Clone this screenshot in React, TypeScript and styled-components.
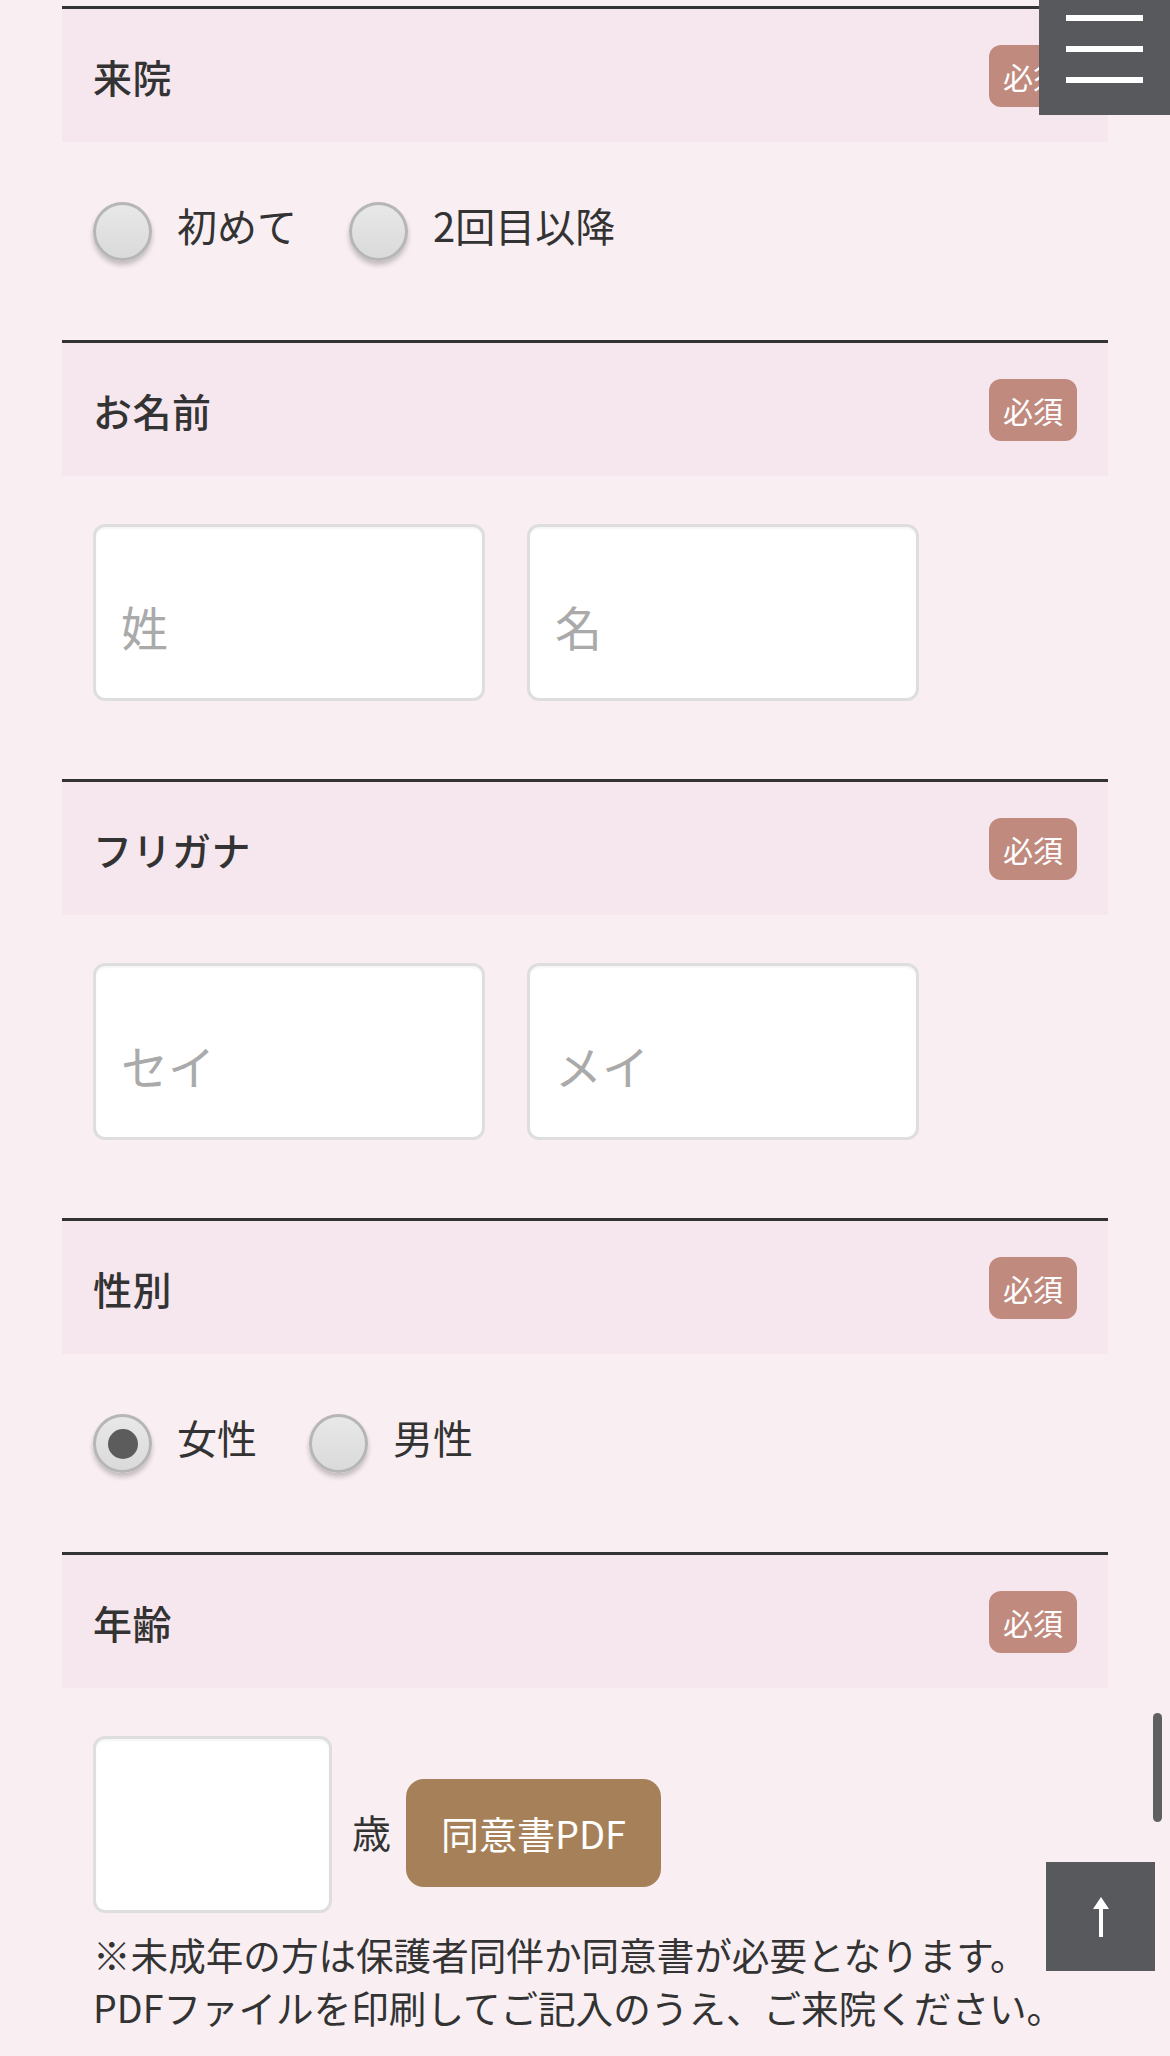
import styled, { createGlobalStyle } from 'styled-components'

const GlobalStyle = createGlobalStyle`
  html, body {
    margin: 0;
    padding: 0;
    overflow: hidden;
    background: #f9eff3;
    font-family: 'Noto Sans CJK JP', 'Noto Sans', sans-serif;
    color: #333;
  }
`

const Page = styled.div`
  padding: 6px 62px 0;
`

const Section = styled.section``

const Head = styled.div`
  display: flex;
  align-items: center;
  justify-content: space-between;
  height: 133px;
  padding: 0 31px;
  border-top: 3px solid #333;
  background: #f6e7ee;
`

const Title = styled.div`
  font-size: 39px;
  font-weight: 500;
  letter-spacing: 0.5px;
`

const Badge = styled.span`
  display: flex;
  align-items: center;
  justify-content: center;
  width: 88px;
  height: 62px;
  border-radius: 12px;
  background: #c08b7e;
  color: #fff;
  font-size: 30px;
  font-weight: 400;
`

const Body = styled.div<{ $top: number; $bottom: number }>`
  padding: ${(p) => p.$top}px 31px ${(p) => p.$bottom}px;
`

const RadioGroup = styled.div`
  display: flex;
  align-items: center;
  gap: 52px;
  height: 57px;
`

const RadioItem = styled.label`
  display: flex;
  align-items: center;
  gap: 25px;
  font-size: 40px;
  line-height: 1;
`

const RadioText = styled.span`
  padding-bottom: 13px;
`

const Circle = styled.span<{ $checked?: boolean }>`
  display: flex;
  align-items: center;
  justify-content: center;
  box-sizing: border-box;
  width: 59px;
  height: 59px;
  border-radius: 50%;
  border: 3px solid #b6b6b6;
  background: linear-gradient(#e8e8e8, #dadada);
  box-shadow: 0 4px 5px rgba(0, 0, 0, 0.22);

  &::after {
    content: '';
    display: ${(p) => (p.$checked ? 'block' : 'none')};
    width: 30px;
    height: 30px;
    border-radius: 50%;
    background: #5c5c5c;
  }
`

const InputRow = styled.div`
  display: flex;
  gap: 42px;
`

const TextBox = styled.input<{ $w: number }>`
  box-sizing: border-box;
  width: ${(p) => p.$w}px;
  height: 177px;
  padding: 26px 25px 0;
  border: 3px solid #dedede;
  border-radius: 12px;
  background: #fff;
  box-shadow: inset 0 2px 2px rgba(0, 0, 0, 0.04);
  font-family: inherit;
  font-size: 47px;
  color: #333;
  outline: none;

  &::placeholder {
    color: #aaa;
  }
`

const AgeRow = styled.div`
  display: flex;
  align-items: center;
`

const Unit = styled.span`
  margin: 12px 0 0 20px;
  font-size: 39px;
`

const PdfButton = styled.a`
  display: flex;
  align-items: center;
  justify-content: center;
  width: 255px;
  height: 108px;
  margin: 16px 0 0 15px;
  border-radius: 18px;
  background: #a68058;
  color: #fff;
  font-size: 38px;
  text-decoration: none;
`

const Note = styled.p`
  margin: 14px 0 0;
  font-size: 37.6px;
  line-height: 53px;
  white-space: nowrap;
`

const MenuButton = styled.button`
  position: fixed;
  top: 0;
  right: 0;
  display: flex;
  flex-direction: column;
  gap: 25px;
  width: 131px;
  height: 115px;
  padding: 15px 0 0 27px;
  box-sizing: border-box;
  border: none;
  background: #58595d;

  span {
    display: block;
    width: 77px;
    height: 6px;
    background: #fff;
  }
`

const TopButton = styled.a`
  position: fixed;
  right: 15px;
  bottom: 85px;
  display: flex;
  align-items: center;
  justify-content: center;
  width: 109px;
  height: 109px;
  background: #58595d;
`

const ScrollThumb = styled.div`
  position: fixed;
  top: 1713px;
  right: 8px;
  width: 9px;
  height: 109px;
  border-radius: 5px;
  background: rgba(70, 70, 70, 0.85);
`

type Field =
  | { kind: 'radio'; title: string; options: string[]; checked?: number }
  | { kind: 'text'; title: string; placeholders: string[] }

const fields: Field[] = [
  { kind: 'radio', title: '来院', options: ['初めて', '2回目以降'] },
  { kind: 'text', title: 'お名前', placeholders: ['姓', '名'] },
  { kind: 'text', title: 'フリガナ', placeholders: ['セイ', 'メイ'] },
  { kind: 'radio', title: '性別', options: ['女性', '男性'], checked: 0 },
]

const Header = ({ title }: { title: string }) => (
  <Head>
    <Title>{title}</Title>
    <Badge>必須</Badge>
  </Head>
)

const App = () => {
  return (
    <>
      <GlobalStyle />
      <Page>
        {fields.map((f) => (
          <Section key={f.title}>
            <Header title={f.title} />
            {f.kind === 'radio' ? (
              <Body $top={61} $bottom={80}>
                <RadioGroup>
                  {f.options.map((o, i) => (
                    <RadioItem key={o}>
                      <Circle $checked={f.checked === i} />
                      <RadioText>{o}</RadioText>
                    </RadioItem>
                  ))}
                </RadioGroup>
              </Body>
            ) : (
              <Body $top={48} $bottom={78}>
                <InputRow>
                  {f.placeholders.map((p) => (
                    <TextBox key={p} $w={392} placeholder={p} />
                  ))}
                </InputRow>
              </Body>
            )}
          </Section>
        ))}
        <Section>
          <Header title="年齢" />
          <Body $top={48} $bottom={0}>
            <AgeRow>
              <TextBox $w={239} />
              <Unit>歳</Unit>
              <PdfButton href="#">同意書PDF</PdfButton>
            </AgeRow>
            <Note>
              ※未成年の方は保護者同伴か同意書が必要となります。
              <br />
              PDFファイルを印刷してご記入のうえ、ご来院ください。
            </Note>
          </Body>
        </Section>
      </Page>
      <MenuButton aria-label="menu">
        <span />
        <span />
        <span />
      </MenuButton>
      <TopButton href="#">
        <svg width="20" height="40" viewBox="0 0 20 40">
          <path d="M10 0 L18 12 H12 V40 H8 V12 H2 Z" fill="#fff" />
        </svg>
      </TopButton>
      <ScrollThumb />
    </>
  )
}

export default App
